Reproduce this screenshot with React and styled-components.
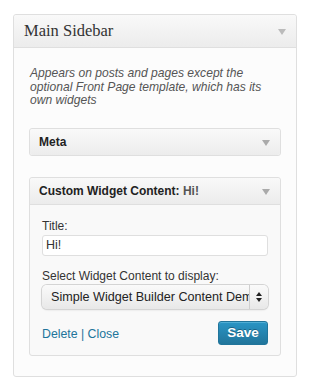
import React from 'react'
import styled, { createGlobalStyle } from 'styled-components'

const Global = createGlobalStyle`
  body {
    margin: 0;
    background: #fff;
    font-family: "Liberation Sans", Arial, sans-serif;
    color: #333;
  }
`

const Panel = styled.div`
  margin: 14px 13px 0;
  width: 282px;
  border: 1px solid #dfdfdf;
  border-radius: 3px;
  background: #fcfcfc;
`

const PanelHeader = styled.div`
  height: 32px;
  display: flex;
  align-items: center;
  justify-content: space-between;
  padding: 0 10px;
  border-bottom: 1px solid #dfdfdf;
  background: linear-gradient(#f9f9f9, #ececec);
  border-radius: 3px 3px 0 0;
`

const PanelTitle = styled.h3`
  margin: 0;
  font-family: "Liberation Serif", Georgia, serif;
  font-weight: normal;
  font-size: 16.5px;
  color: #333;
`

const Arrow = styled.span`
  width: 0;
  height: 0;
  border-left: 4px solid transparent;
  border-right: 4px solid transparent;
  border-top: 6px solid ${p => p.$light ? '#bbb' : '#aaa'};
  margin-top: 2px;
`

const PanelBody = styled.div`
  padding: 19px 15px 20px;
`

const Description = styled.p`
  margin: 0 0 0 1px;
  font-style: italic;
  font-size: 12.1px;
  line-height: 13.5px;
  color: #555;
`

const Widget = styled.div`
  margin-top: ${p => p.$gap}px;
  border: 1px solid #dfdfdf;
  border-radius: 3px;
  background: #f9f9f9;
`

const WidgetHeader = styled.div`
  height: 26px;
  display: flex;
  align-items: center;
  justify-content: space-between;
  padding: 0 10px 0 9px;
  background: linear-gradient(#f9f9f9, #ececec);
  border-radius: ${p => p.$open ? '3px 3px 0 0' : '3px'};
  border-bottom: ${p => p.$open ? '1px solid #dfdfdf' : 'none'};
`

const WidgetTitle = styled.span`
  font-size: 12px;
  font-weight: bold;
  color: #222;
`

const InTitle = styled.span`
  color: #555;
`

const WidgetBody = styled.div`
  padding: 14px 12px 10px 12px;
`

const Label = styled.div`
  font-size: 12px;
  color: #333;
  line-height: 15px;
`

const TextInput = styled.div`
  margin: 1px 0 13px;
  height: 19px;
  border: 1px solid #dfdfdf;
  border-radius: 3px;
  background: #fff;
  font-size: 12.5px;
  line-height: 19px;
  padding-left: 3px;
  color: #333;
`

const SelectBox = styled.div`
  margin-top: 1px;
  height: 24px;
  display: flex;
  border-radius: 5px;
  background: linear-gradient(#fafafa, #e8e8e8);
  box-shadow: 0 0 0 1px #d4d4d4, 0 1px 2px rgba(0,0,0,0.15);
`

const SelectValue = styled.span`
  flex: 1;
  overflow: hidden;
  white-space: nowrap;
  font-size: 12.6px;
  line-height: 24px;
  padding-left: 9px;
  color: #222;
  border-right: 1px solid #cfcfcf;
`

const SelectArrows = styled.span`
  width: 18px;
  display: flex;
  flex-direction: column;
  align-items: center;
  justify-content: center;
  gap: 2px;
`

const Tri = styled.span`
  width: 0;
  height: 0;
  border-left: 3px solid transparent;
  border-right: 3px solid transparent;
  ${p => p.$up ? 'border-bottom: 4px solid #222;' : 'border-top: 4px solid #222;'}
`

const Actions = styled.div`
  margin-top: 12px;
  display: flex;
  align-items: center;
  justify-content: space-between;
`

const Links = styled.div`
  font-size: 12.3px;
  color: #21759b;
  padding-top: 3px;
`

const Link = styled.a`
  color: #21759b;
  text-decoration: none;
`

const SaveButton = styled.button`
  width: 50px;
  height: 24px;
  border: 1px solid #21759b;
  border-radius: 3px;
  background: linear-gradient(#2a95c5, #21759b);
  color: #fff;
  font-family: "Liberation Sans", Arial, sans-serif;
  font-size: 13.5px;
  font-weight: bold;
  padding: 0;
  box-shadow: inset 0 1px 0 rgba(120,200,230,0.5);
  text-shadow: 0 -1px 0 rgba(0,0,0,0.3);
`

export default function App() {
  return (
    <>
      <Global />
      <Panel>
        <PanelHeader>
          <PanelTitle>Main Sidebar</PanelTitle>
          <Arrow $light />
        </PanelHeader>
        <PanelBody>
          <Description>
            Appears on posts and pages except the optional Front Page template, which has its own widgets
          </Description>
          <Widget $gap={20}>
            <WidgetHeader>
              <WidgetTitle>Meta</WidgetTitle>
              <Arrow />
            </WidgetHeader>
          </Widget>
          <Widget $gap={21}>
            <WidgetHeader $open>
              <WidgetTitle>Custom Widget Content: <InTitle>Hi!</InTitle></WidgetTitle>
              <Arrow />
            </WidgetHeader>
            <WidgetBody>
              <Label>Title:</Label>
              <TextInput>Hi!</TextInput>
              <Label>Select Widget Content to display:</Label>
              <SelectBox>
                <SelectValue>Simple Widget Builder Content Demo</SelectValue>
                <SelectArrows>
                  <Tri $up />
                  <Tri />
                </SelectArrows>
              </SelectBox>
              <Actions>
                <Links>
                  <Link href="#">Delete</Link> | <Link href="#">Close</Link>
                </Links>
                <SaveButton>Save</SaveButton>
              </Actions>
            </WidgetBody>
          </Widget>
        </PanelBody>
      </Panel>
    </>
  )
}
